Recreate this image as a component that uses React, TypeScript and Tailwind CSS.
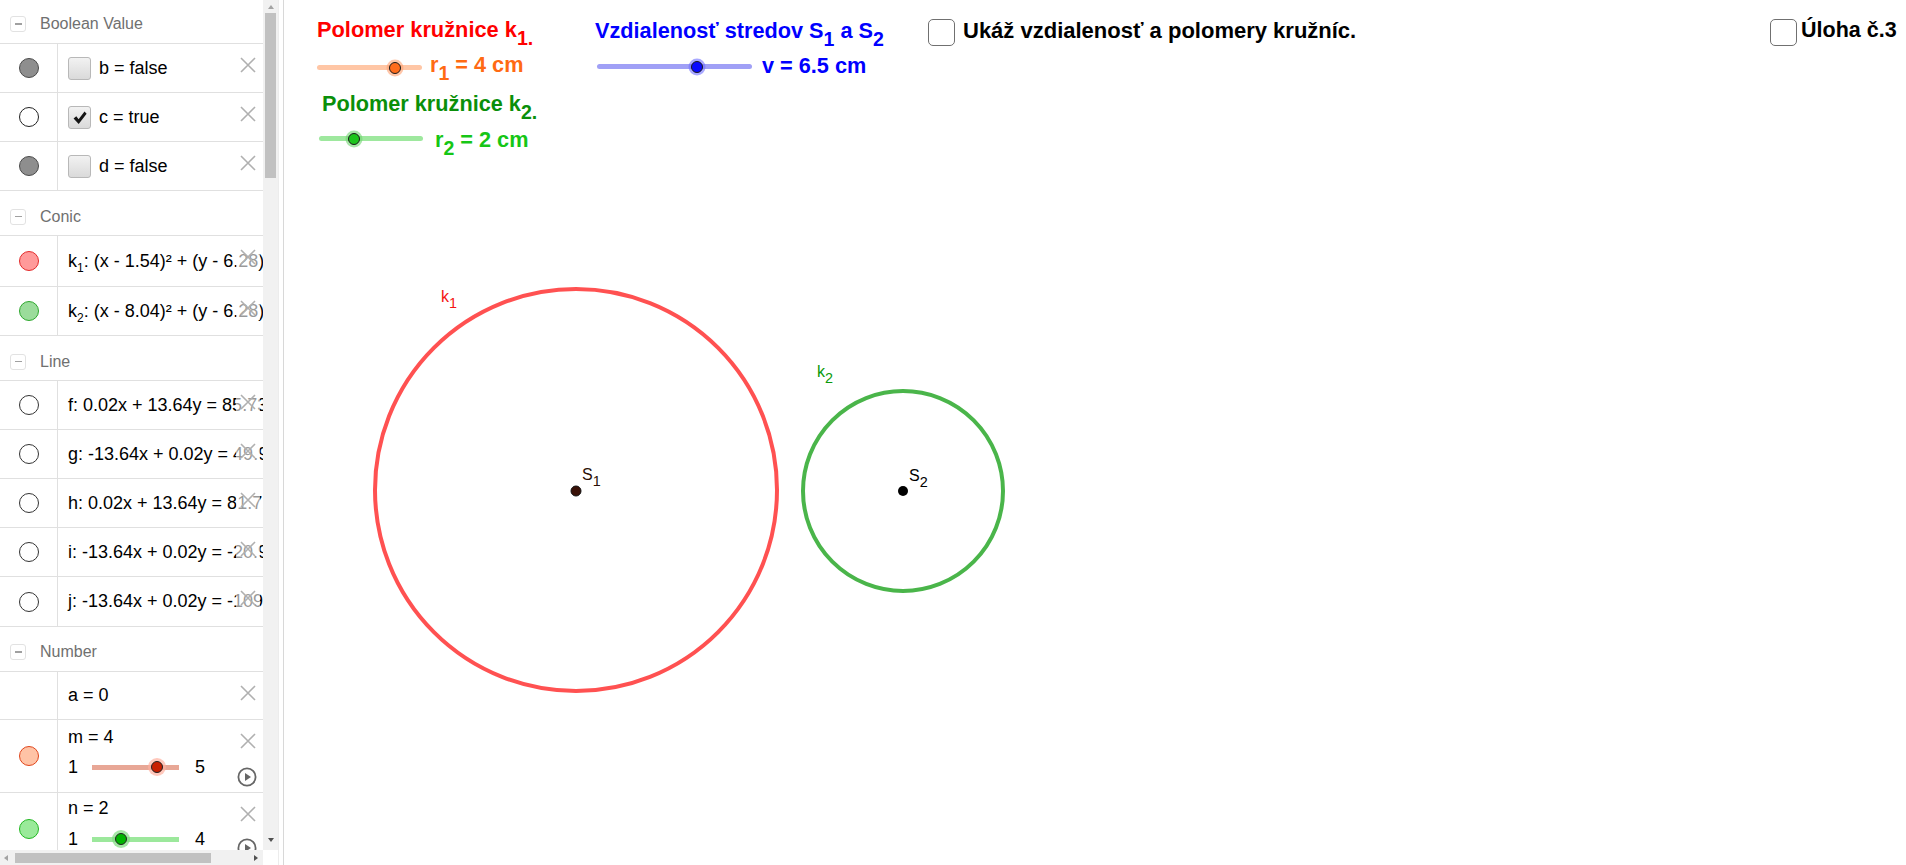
import React from "react";

type Kids = { children?: React.ReactNode };

// subscript used in the graphics view (big, GeoGebra style)
function Sub({ children }: Kids) {
  return <span className="relative top-[0.4em] text-[0.9em]">{children}</span>;
}

// small subscript used in the algebra view
function SmallSub({ children }: Kids) {
  return <span className="relative top-[5px] text-[12px]">{children}</span>;
}

function Close() {
  return (
    <div className="absolute right-[3px] top-[9px] flex h-[24px] w-[24px] items-center justify-center bg-white/60">
      <svg width="16" height="16" viewBox="0 0 16 16">
        <path d="M1 1 L15 15 M15 1 L1 15" stroke="#b0b0b0" strokeWidth="1.6" fill="none" />
      </svg>
    </div>
  );
}

function Play({ top }: { top: string }) {
  return (
    <div className={`absolute right-[6px] ${top}`}>
      <svg width="20" height="20" viewBox="0 0 20 20">
        <circle cx="10" cy="10" r="8.6" stroke="#666" strokeWidth="1.8" fill="none" />
        <path d="M8 6 L14 10 L8 14 Z" fill="#666" />
      </svg>
    </div>
  );
}

function Header({ label, h }: { label: string; h: string }) {
  return (
    <div className={`flex shrink-0 items-center border-b border-[#e0e0e0] ${h}`}>
      <div className="ml-[10px] flex h-[16px] w-[16px] items-center justify-center rounded-[3px] border border-[#e2e2e2]">
        <div className="h-[1.5px] w-[7px] bg-[#a0a0a0]" />
      </div>
      <span className="ml-[14px] text-[16px] text-[#707070]">{label}</span>
    </div>
  );
}

function Item({ dot, h = "h-[49px]", children }: { dot?: string; h?: string; children?: React.ReactNode }) {
  return (
    <div className={`flex shrink-0 border-b border-[#e0e0e0] ${h}`}>
      <div className="flex w-[58px] shrink-0 items-center justify-center border-r border-[#e0e0e0]">
        {dot && <div className={`h-[20px] w-[20px] rounded-full border ${dot}`} />}
      </div>
      <div className="relative flex min-w-0 flex-1 items-center overflow-hidden whitespace-nowrap pl-[10px] text-[18px] text-black">
        {children}
        <Close />
      </div>
    </div>
  );
}

function Box({ checked }: { checked?: boolean }) {
  return (
    <div className="mr-[8px] flex h-[23px] w-[23px] shrink-0 items-center justify-center rounded-[3px] border border-[#b8b8b8] bg-gradient-to-b from-[#f2f2f2] to-[#dadada]">
      {checked && (
        <svg width="23" height="23" viewBox="0 0 23 23">
          <path d="M5 12.5 L8 10 L10.5 13.5 L17 5 L19.3 7.3 L10.6 18.6 Z" fill="#151515" />
        </svg>
      )}
    </div>
  );
}

function MiniSlider({ track, knob, halo, pos }: { track: string; knob: string; halo: string; pos: string }) {
  return (
    <div className={`relative ml-[14px] h-[5px] w-[87px] ${track}`}>
      <div className={`absolute top-1/2 h-[18px] w-[18px] -translate-x-1/2 -translate-y-1/2 rounded-full ${halo} ${pos}`} />
      <div className={`absolute top-1/2 h-[12px] w-[12px] -translate-x-1/2 -translate-y-1/2 rounded-full border border-[#222] ${knob} ${pos}`} />
    </div>
  );
}

function Sidebar() {
  return (
    <div className="flex h-full w-[284px] shrink-0 border-r border-[#d8d8d8] bg-white">
      <div className="flex w-[263px] flex-col">
        <div className="flex h-[850px] flex-col overflow-hidden">
          <Header label="Boolean Value" h="h-[44px] pt-[5px]" />
          <Item dot="bg-[#8e8e8e] border-[#4a4a4a]">
            <Box />b = false
          </Item>
          <Item dot="bg-white border-[#222]">
            <Box checked />c = true
          </Item>
          <Item dot="bg-[#8e8e8e] border-[#4a4a4a]">
            <Box />d = false
          </Item>
          <Header label="Conic" h="h-[45px] pt-[7px]" />
          <Item dot="bg-[#ff9a9a] border-[#e32a2a]" h="h-[51px]">
            <span>
              k<SmallSub>1</SmallSub>: (x - 1.54)² + (y - 6.28)² = 16
            </span>
          </Item>
          <Item dot="bg-[#9bdc9b] border-[#2ea82e]">
            <span>
              k<SmallSub>2</SmallSub>: (x - 8.04)² + (y - 6.28)² = 4
            </span>
          </Item>
          <Header label="Line" h="h-[45px] pt-[7px]" />
          <Item dot="bg-white border-[#333]">f: 0.02x + 13.64y = 85.73</Item>
          <Item dot="bg-white border-[#333]">g: -13.64x + 0.02y = 49.96</Item>
          <Item dot="bg-white border-[#333]">h: 0.02x + 13.64y = 81.71</Item>
          <Item dot="bg-white border-[#333]">i: -13.64x + 0.02y = -20.96</Item>
          <Item dot="bg-white border-[#333]" h="h-[50px]">j: -13.64x + 0.02y = -109.6</Item>
          <Header label="Number" h="h-[45px] pt-[6px]" />
          <Item h="h-[48px]">a = 0</Item>
          <Item dot="bg-[#ffc3a6] border-[#e0461c]" h="h-[73px]">
            <div className="flex flex-col self-start pt-[7px]">
              <span className="leading-[20px]">m = 4</span>
              <div className="mt-[10px] flex h-[20px] items-center">
                <span>1</span>
                <MiniSlider track="bg-[#e8a796]" halo="bg-[#ffb0a0]/70" knob="bg-[#c81f00]" pos="left-[65px]" />
                <span className="ml-[16px]">5</span>
              </div>
            </div>
            <Play top="top-[47px]" />
          </Item>
          <Item dot="bg-[#9aea9a] border-[#22b822]" h="h-[73px]">
            <div className="flex flex-col self-start pt-[5px]">
              <span className="leading-[20px]">n = 2</span>
              <div className="mt-[11px] flex h-[20px] items-center">
                <span>1</span>
                <MiniSlider track="bg-[#9ce89c]" halo="bg-[#7fdc7f]/70" knob="bg-[#00b400]" pos="left-[29px]" />
                <span className="ml-[16px]">4</span>
              </div>
            </div>
            <Play top="top-[45px]" />
          </Item>
        </div>
        {/* horizontal scrollbar */}
        <div className="flex h-[15px] items-center bg-[#f1f1f1]">
          <div className="ml-[4px] h-0 w-0 border-y-[3.5px] border-r-[4px] border-y-transparent border-r-[#a3a3a3]" />
          <div className="ml-[7px] h-[10px] w-[196px] bg-[#c1c1c1]" />
          <div className="ml-auto mr-[5px] h-0 w-0 border-y-[3.5px] border-l-[4px] border-y-transparent border-l-[#505050]" />
        </div>
      </div>
      {/* vertical scrollbar */}
      <div className="flex w-[15px] flex-col">
        <div className="flex h-[850px] flex-col bg-[#f1f1f1]">
          <div className="flex h-[13px] items-center justify-center">
            <div className="h-0 w-0 border-x-[3.5px] border-b-[4px] border-x-transparent border-b-[#a3a3a3]" />
          </div>
          <div className="mx-[2px] h-[165px] bg-[#c1c1c1]" />
          <div className="flex-1" />
          <div className="flex h-[15px] items-start justify-center pt-[3px]">
            <div className="h-0 w-0 border-x-[3.5px] border-t-[4px] border-x-transparent border-t-[#505050]" />
          </div>
        </div>
        <div className="h-[15px] bg-white" />
      </div>
      <div className="w-[5px] border-l border-[#ececec]" />
    </div>
  );
}

function Slider({ place, width, track, halo, knob, pos }: { place: string; width: string; track: string; halo: string; knob: string; pos: string }) {
  return (
    <div className={`absolute h-[5px] rounded-full ${place} ${width} ${track}`}>
      <div className={`absolute top-1/2 h-[17px] w-[17px] -translate-x-1/2 -translate-y-1/2 rounded-full ${halo} ${pos}`} />
      <div className={`absolute top-1/2 h-[12px] w-[12px] -translate-x-1/2 -translate-y-1/2 rounded-full border border-[#1a1a1a] ${knob} ${pos}`} />
    </div>
  );
}

function Graphics() {
  return (
    <div className="relative h-full flex-1 overflow-hidden bg-white">
      {/* circles */}
      <svg className="absolute left-0 top-0" width="1622" height="865">
        <circle cx="292" cy="490" r="201" fill="none" stroke="#ff5151" strokeWidth="4" />
        <circle cx="619" cy="491" r="100" fill="none" stroke="#4ab54a" strokeWidth="4" />
        <circle cx="292" cy="491" r="5" fill="#3a1208" stroke="#111" strokeWidth="1" />
        <circle cx="619" cy="491" r="5" fill="#000" />
      </svg>

      <div className="absolute left-[157px] top-[289px] text-[16px] leading-none text-[#f41414]">
        k<Sub>1</Sub>
      </div>
      <div className="absolute left-[533px] top-[364px] text-[16px] leading-none text-[#0a9a0a]">
        k<Sub>2</Sub>
      </div>
      <div className="absolute left-[298px] top-[467px] text-[16px] leading-none text-[#2b0f05]">
        S<Sub>1</Sub>
      </div>
      <div className="absolute left-[625px] top-[468px] text-[16px] leading-none text-black">
        S<Sub>2</Sub>
      </div>

      {/* sliders and captions */}
      <div className="absolute left-[33px] top-[19px] whitespace-nowrap text-[21.8px] font-bold leading-none text-[#ff0000]">
        Polomer kružnice k<Sub>1.</Sub>
      </div>
      <Slider place="left-[33px] top-[65px]" width="w-[105px]" track="bg-[#ffc6a5]" halo="bg-[#ffa070]/60" knob="bg-[#ff6c1c]" pos="left-[78px]" />
      <div className="absolute left-[146px] top-[54px] whitespace-nowrap text-[21.7px] font-bold leading-none text-[#ff6a13]">
        r<Sub>1</Sub> = 4 cm
      </div>

      <div className="absolute left-[38px] top-[93px] whitespace-nowrap text-[21.7px] font-bold leading-none text-[#0a8f0a]">
        Polomer kružnice k<Sub>2.</Sub>
      </div>
      <Slider place="left-[35px] top-[136px]" width="w-[104px]" track="bg-[#9ee89e]" halo="bg-[#6fd46f]/60" knob="bg-[#1dc41d]" pos="left-[35px]" />
      <div className="absolute left-[151px] top-[129px] whitespace-nowrap text-[21.7px] font-bold leading-none text-[#16c616]">
        r<Sub>2</Sub> = 2 cm
      </div>

      <div className="absolute left-[311px] top-[20px] whitespace-nowrap text-[21.7px] font-bold leading-none text-[#0000ff]">
        Vzdialenosť stredov S<Sub>1</Sub> a S<Sub>2</Sub>
      </div>
      <Slider place="left-[313px] top-[64px]" width="w-[155px]" track="bg-[#a0a0f6]" halo="bg-[#7070ff]/60" knob="bg-[#0a0aff]" pos="left-[100px]" />
      <div className="absolute left-[478px] top-[55px] whitespace-nowrap text-[21.7px] font-bold leading-none text-[#0000ff]">
        v = 6.5 cm
      </div>

      {/* check boxes */}
      <div className="absolute left-[644px] top-[19px] flex items-start gap-[8px]">
        <div className="h-[27px] w-[27px] rounded-[5px] border-[1.5px] border-[#707070] bg-white" />
        <span className="mt-[1px] whitespace-nowrap text-[22px] font-bold leading-none text-black">
          Ukáž vzdialenosť a polomery kružníc.
        </span>
      </div>
      <div className="absolute left-[1486px] top-[19px] flex items-start gap-[4px]">
        <div className="h-[27px] w-[27px] rounded-[5px] border-[1.5px] border-[#707070] bg-white" />
        <span className="mt-[1px] whitespace-nowrap text-[21.5px] font-bold leading-none text-black">Úloha č.3</span>
      </div>
    </div>
  );
}

export default function App() {
  return (
    <div className="flex h-[865px] w-full overflow-hidden bg-white font-['Liberation_Sans',Arial,sans-serif]">
      <Sidebar />
      <Graphics />
    </div>
  );
}
